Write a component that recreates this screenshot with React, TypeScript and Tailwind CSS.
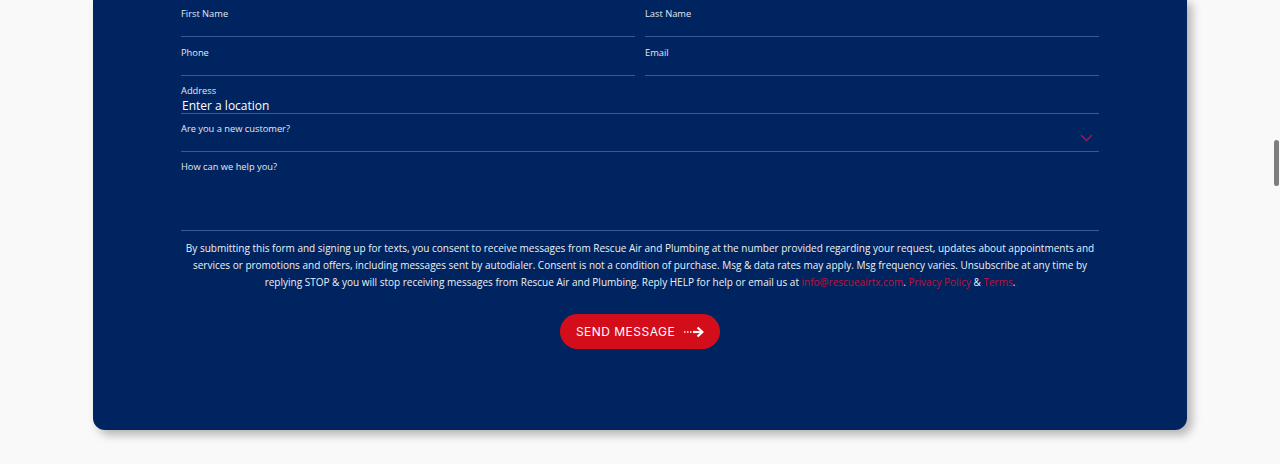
import type { ReactNode } from "react";

const LINE = "border-b border-[#3a5a93]";

function Label({ children }: { children: ReactNode }) {
    return <span className="block text-[9.3px] leading-[14px] text-[#e4e9f2]">{children}</span>;
}

function Field({ label }: { label: string }) {
    return (
        <div className={`${LINE} h-[39px] pt-[9px]`}>
            <Label>{label}</Label>
        </div>
    );
}

function ArrowIcon() {
    return (
        <svg width="20" height="12" viewBox="0 0 20 12" fill="none" className="text-white">
            <path d="M0 6h1.5M3 6h1.5M6 6h1.5" stroke="currentColor" strokeWidth="1.6" />
            <path d="M9 6h9" stroke="currentColor" strokeWidth="2.2" />
            <path d="M13.5 1.5L18.5 6l-5 4.5" stroke="currentColor" strokeWidth="2.2" strokeLinejoin="round" />
        </svg>
    );
}

export default function App() {
    return (
        <div className="min-h-[466px] bg-[#f9f9f9] font-['Open_Sans',sans-serif]">
            <section className="mx-auto -mt-[2px] w-[1094px] rounded-b-[12px] bg-[#00245f] px-[88px] pb-[81px] shadow-[5px_5px_10px_rgba(0,0,0,0.28)]">
                <form className="flex flex-col">
                    <div className="grid grid-cols-2 gap-x-[10px]">
                        <Field label="First Name" />
                        <Field label="Last Name" />
                        <Field label="Phone" />
                        <Field label="Email" />
                    </div>

                    <div className={`${LINE} h-[38px] pt-[8px]`}>
                        <Label>Address</Label>
                        <span className="block pl-[1px] text-[12px] leading-[16px] text-white">Enter a location</span>
                    </div>

                    <div className={`${LINE} flex h-[38px] flex-col pt-[8px]`}>
                        <Label>Are you a new customer?</Label>
                        <div className="-mt-[2px] flex justify-end pr-[6px]">
                            <svg width="13" height="8" viewBox="0 0 13 8" fill="none">
                                <path d="M1 1l5.5 5.5L12 1" stroke="#9a1650" strokeWidth="1.6" />
                            </svg>
                        </div>
                    </div>

                    <div className={`${LINE} h-[79px] pt-[8px]`}>
                        <Label>How can we help you?</Label>
                    </div>

                    <p className="mt-[9px] text-center text-[10px] leading-[17px] text-[#eef1f6]">
                        By submitting this form and signing up for texts, you consent to receive messages from Rescue Air and
                        Plumbing at the number provided regarding your request, updates about appointments and services or
                        promotions and offers, including messages sent by autodialer. Consent is not a condition of purchase.
                        Msg &amp; data rates may apply. Msg frequency varies. Unsubscribe at any time by replying STOP &amp; you
                        will stop receiving messages from Rescue Air and Plumbing. Reply HELP for help or email us at{" "}
                        <a className="text-[#c0123a]">info@rescueairtx.com</a>.{" "}
                        <a className="text-[#c0123a]">Privacy Policy</a> &amp; <a className="text-[#c0123a]">Terms</a>.
                    </p>

                    <div className="mt-[23px] flex justify-center">
                        <button
                            type="button"
                            className="flex h-[35px] w-[160px] items-center justify-center gap-[9px] rounded-full bg-[#d40d1b] font-['Inter',sans-serif] text-[12px] tracking-[0.04em] text-white"
                        >
                            SEND MESSAGE
                            <ArrowIcon />
                        </button>
                    </div>
                </form>
            </section>

            {/* scroll thumb */}
            <div className="fixed right-[1px] top-[140px] h-[46px] w-[5px] rounded-full bg-[#7d7d7d]" />
        </div>
    );
}
